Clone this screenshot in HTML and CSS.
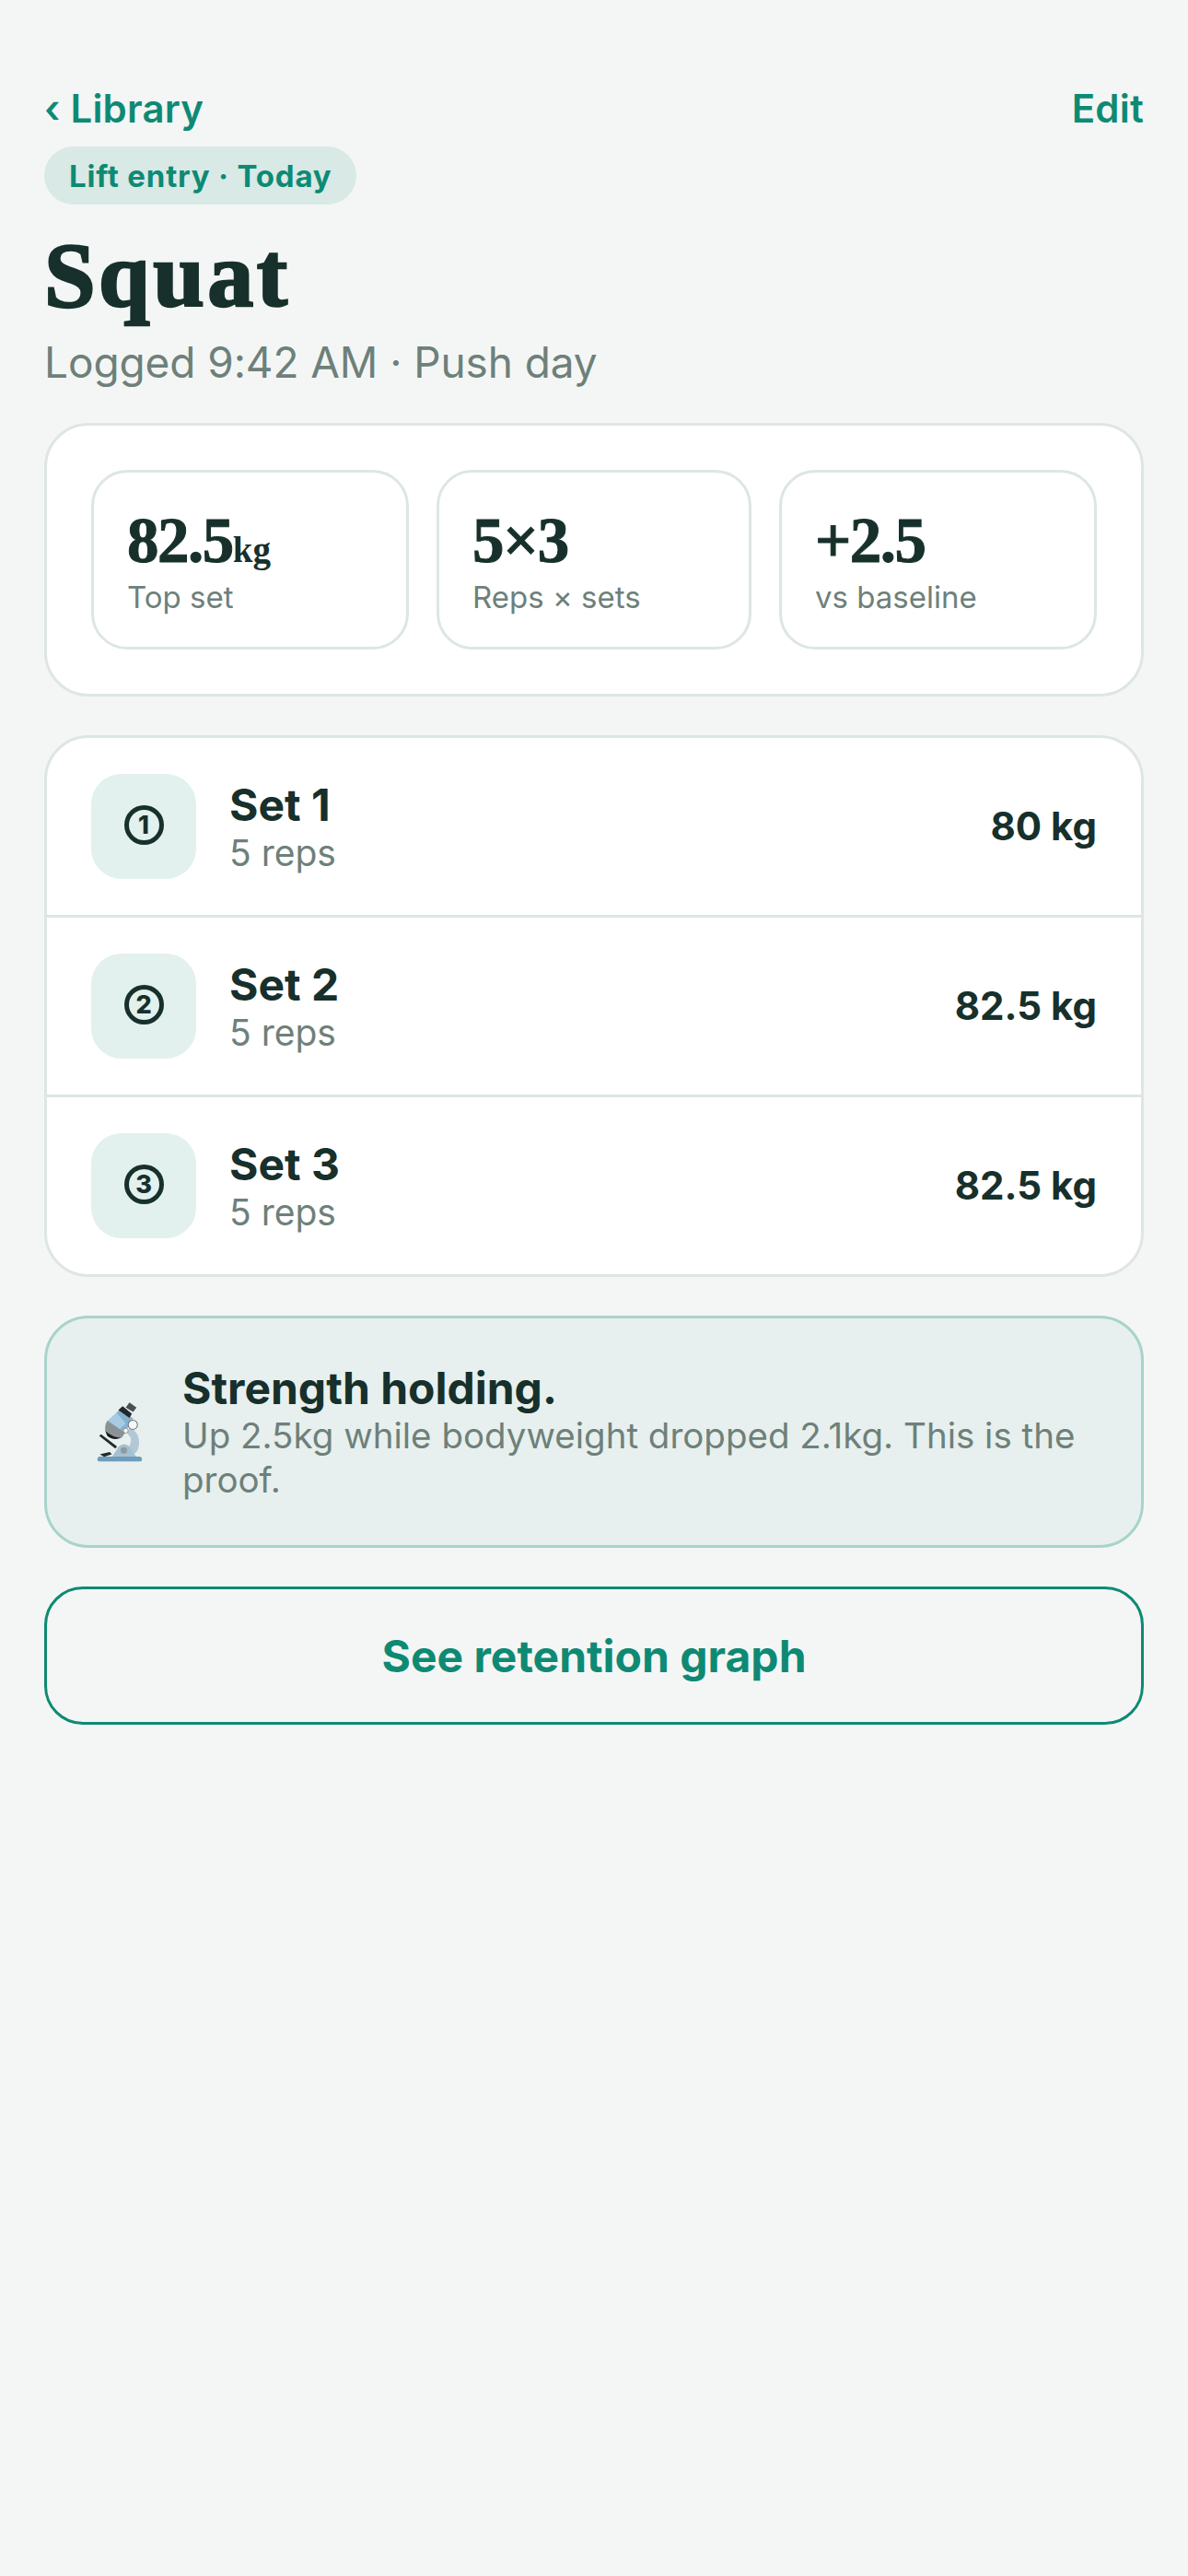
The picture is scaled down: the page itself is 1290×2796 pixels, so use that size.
FILE: index.html
```html
<!DOCTYPE html>
<html lang="en">

<head>
  <meta charset="UTF-8">
  <meta name="viewport" content="width=device-width, initial-scale=1.0">
  <title>Squat</title>
  <link rel="stylesheet" href="styles.css">
</head>

<body>

  <main class="screen">

    <div class="topbar">
      <span class="nav-link">‹ Library</span>
      <span class="nav-link">Edit</span>
    </div>

    <span class="pill">Lift entry · Today</span>
    <h1 class="title">Squat</h1>
    <p class="subtitle">Logged 9:42 AM · Push day</p>

    <!-- Stats -->
    <section class="card stats">
      <div class="stat">
        <div class="stat-value">82.5<span class="stat-unit">kg</span></div>
        <div class="stat-label">Top set</div>
      </div>
      <div class="stat">
        <div class="stat-value">5×3</div>
        <div class="stat-label">Reps × sets</div>
      </div>
      <div class="stat">
        <div class="stat-value">+2.5</div>
        <div class="stat-label">vs baseline</div>
      </div>
    </section>

    <!-- Sets -->
    <section class="card sets">
      <div class="set-row">
        <div class="set-icon"><span class="set-number">1</span></div>
        <div class="set-text">
          <div class="set-name">Set 1</div>
          <div class="set-reps">5 reps</div>
        </div>
        <div class="set-weight">80 kg</div>
      </div>
      <div class="set-row">
        <div class="set-icon"><span class="set-number">2</span></div>
        <div class="set-text">
          <div class="set-name">Set 2</div>
          <div class="set-reps">5 reps</div>
        </div>
        <div class="set-weight">82.5 kg</div>
      </div>
      <div class="set-row">
        <div class="set-icon"><span class="set-number">3</span></div>
        <div class="set-text">
          <div class="set-name">Set 3</div>
          <div class="set-reps">5 reps</div>
        </div>
        <div class="set-weight">82.5 kg</div>
      </div>
    </section>

    <!-- Callout -->
    <section class="callout">
      <svg class="callout-icon" viewBox="195 300 155 200" aria-hidden="true">
        <!-- stage and base -->
        <path d="M206 412 L212 407 L264 446 L258 453Z" fill="#26292b"/>
        <path d="M208 472 L240 464 L247 472 L222 480Z" fill="#26292b"/>
        <path d="M305 385 Q338 400 335 440 Q332 465 318 470 L296 455 Q312 440 308 418 L296 402Z" fill="#b3c8d4"/>
        <path d="M248 480 L268 448 Q285 432 302 445 L326 480Z" fill="#a4c1d3"/>
        <circle cx="286" cy="459" r="12" fill="#8f9ba2" stroke="#b9c7cf" stroke-width="2"/>
        <path d="M206 479 H338 Q345 480 345 488 Q345 495 336 495 H208 Q200 495 200 488 Q200 480 206 479Z" fill="#6f9cbc"/>
        <!-- tube -->
        <path d="M232 365 L276 324 L316 356 L288 402Z" fill="#86b1d0"/>
        <path d="M232 365 L262 337 L292 372 L270 392Z" fill="#a8cbe3"/>
        <path d="M233 363 L290 402 L279 418 Q250 424 226 398 Q222 378 233 363Z" fill="#8b9296"/>
        <path d="M226 396 Q248 416 277 419 Q250 428 232 412Z" fill="#17191a"/>
        <path d="M268 328 L282 316 L312 340 L304 354Z" fill="#23282b"/>
        <path d="M292 320 L304 304 L327 320 L316 334Z" fill="#4a4f52"/>
        <circle cx="315" cy="376" r="15" fill="#f5f8f9" stroke="#6d7477" stroke-width="3"/>
        <circle cx="292" cy="395" r="8" fill="#f5f8f9" stroke="#6d7477" stroke-width="2"/>
      </svg>
      <div class="callout-text">
        <div class="callout-title">Strength holding.</div>
        <div class="callout-body">Up 2.5kg while bodyweight dropped 2.1kg. This is the proof.</div>
      </div>
    </section>

    <button class="action">See retention graph</button>

  </main>

</body>

</html>
```

FILE: styles.css
```css
* {
  box-sizing: border-box;
}

body {
  margin: 0;
  background-color: #f4f6f5;
  color: #17302b;
  font-family: Inter, 'Noto Sans', sans-serif;
}

.screen {
  display: flex;
  flex-direction: column;
  align-items: stretch;
  min-height: 2796px;
  padding: 93px 48px 48px;
}

.topbar {
  display: flex;
  justify-content: space-between;
  align-items: center;
  height: 48px;
  margin-bottom: 18px;
}

.nav-link {
  font-size: 42px;
  font-weight: 600;
  letter-spacing: 0.2px;
  color: #0e8a74;
}

.pill {
  align-self: flex-start;
  height: 63px;
  line-height: 65px;
  padding: 0 27px;
  border-radius: 32px;
  background-color: #d9e9e5;
  color: #0e8a74;
  font-size: 33px;
  font-weight: 700;
  letter-spacing: 0.8px;
}

.title {
  margin: 29px 0 0;
  font-family: 'Liberation Serif', serif;
  font-size: 100px;
  line-height: 96px;
  font-weight: 700;
  letter-spacing: 3.5px;
  -webkit-text-stroke: 2.5px #17302b;
  color: #17302b;
}

.subtitle {
  margin: 19px 0 0;
  font-size: 46px;
  line-height: 54px;
  letter-spacing: -0.1px;
  color: #6e807a;
}

.card {
  background-color: #fff;
  border: 3px solid #dde6e4;
  border-radius: 48px;
}

/* Stats */
.stats {
  display: grid;
  grid-template-columns: 1fr 342px 1fr;
  gap: 30px;
  margin-top: 39px;
  padding: 48px;
}

.stat {
  height: 195px;
  padding: 38px 36px 0;
  border: 3px solid #dde6e4;
  border-radius: 39px;
}

.stat-value {
  font-family: 'Liberation Serif', serif;
  font-size: 69px;
  line-height: 72px;
  font-weight: 700;
  letter-spacing: -1.5px;
  -webkit-text-stroke: 1px #17302b;
}

.stat-unit {
  font-size: 39px;
  line-height: 1;
  letter-spacing: 0;
  -webkit-text-stroke: 0;
}

.stat-label {
  margin-top: 4px;
  font-size: 33px;
  line-height: 42px;
  color: #6e807a;
}

/* Sets */
.sets {
  margin-top: 42px;
}

.set-row {
  display: flex;
  align-items: center;
  gap: 36px;
  padding: 39px 48px;
  border-bottom: 3px solid #dde6e4;
}

.set-row:last-child {
  border-bottom: none;
}

.set-icon {
  display: flex;
  justify-content: center;
  align-items: center;
  width: 114px;
  height: 114px;
  border-radius: 33px;
  background-color: #e2f0ee;
}

.set-number {
  display: flex;
  justify-content: center;
  align-items: center;
  width: 43px;
  height: 43px;
  margin-bottom: 3px;
  border: 5px solid #17302b;
  border-radius: 50%;
  font-size: 27px;
  line-height: 1;
  font-weight: 800;
}

.set-text {
  flex: 1;
}

.set-name {
  font-size: 48px;
  line-height: 54px;
  font-weight: 700;
}

.set-reps {
  margin-top: 4px;
  font-size: 39px;
  line-height: 42px;
  color: #6e807a;
}

.set-weight {
  margin-bottom: 2px;
  font-size: 42px;
  font-weight: 700;
}

/* Callout */
.callout {
  display: flex;
  align-items: center;
  gap: 42px;
  margin-top: 42px;
  padding: 49px 48px 47px;
  background-color: #e7f0ee;
  border: 3px solid #a8d3cb;
  border-radius: 48px;
}

.callout-icon {
  flex: none;
  width: 52px;
  height: 67px;
  margin-left: 5px;
  margin-bottom: 2px;
}

.callout-title {
  font-size: 48px;
  line-height: 54px;
  font-weight: 700;
}

.callout-body {
  font-size: 38.5px;
  line-height: 48px;
  color: #6e807a;
}

/* Button */
.action {
  height: 150px;
  margin-top: 42px;
  background-color: transparent;
  border: 3px solid #0e8a74;
  border-radius: 42px;
  color: #0e8a74;
  font-family: Inter, 'Noto Sans', sans-serif;
  font-size: 48px;
  font-weight: 700;
}
```
